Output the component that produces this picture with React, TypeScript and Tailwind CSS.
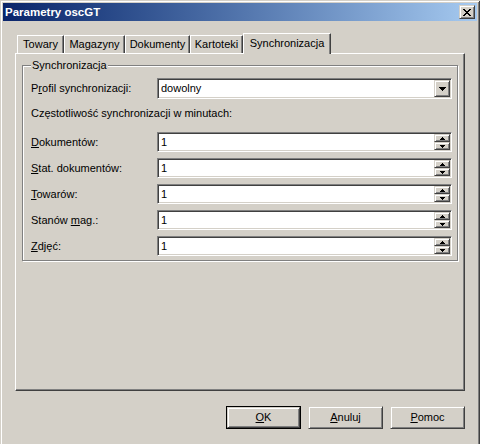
import type { ReactNode } from "react";

const font = { fontFamily: '"Liberation Sans", Arial, sans-serif' };

const tabs = [
  { title: "Towary", w: "w-[47px]" },
  { title: "Magazyny", w: "w-[61px]" },
  { title: "Dokumenty", w: "w-[65px]" },
  { title: "Kartoteki", w: "w-[53px]" },
];

const spinRows: { label: ReactNode }[] = [
  { label: <><u>D</u>okumentów:</> },
  { label: <><u>S</u>tat. dokumentów:</> },
  { label: <><u>T</u>owarów:</> },
  { label: <>Stanów <u>m</u>ag.:</> },
  { label: <><u>Z</u>djęć:</> },
];

// classic 3D edges
const raised =
  "border border-t-[#d4d0c8] border-l-[#d4d0c8] border-b-[#404040] border-r-[#404040] shadow-[inset_1px_1px_#ffffff,inset_-1px_-1px_#808080] bg-[#d4d0c8]";
const sunken =
  "border border-t-[#808080] border-l-[#808080] border-b-white border-r-white shadow-[inset_1px_1px_#404040,inset_-1px_-1px_#d4d0c8] bg-white";

function SpinBox() {
  return (
    <div className={`flex h-[20px] w-[295px] p-[1px] ${sunken}`}>
      <span className="flex-1 pl-[2px] text-[11px] leading-[16px] text-black">1</span>
      <div className="flex w-[16px] flex-col">
        <div className={`flex h-[8px] items-center justify-center ${raised}`}>
          <svg width="5" height="3" viewBox="0 0 5 3">
            <path d="M2 0h1v1h1v1h1v1H0V2h1V1h1z" fill="#000" />
          </svg>
        </div>
        <div className={`flex h-[8px] items-center justify-center ${raised}`}>
          <svg width="5" height="3" viewBox="0 0 5 3">
            <path d="M0 0h5v1H4v1H3v1H2V2H1V1H0z" fill="#000" />
          </svg>
        </div>
      </div>
    </div>
  );
}

function Button({ children, primary }: { children: ReactNode; primary?: boolean }) {
  return (
    <div className={`h-[23px] w-[75px] ${primary ? "border border-black" : ""}`}>
      <div
        className={`flex h-full w-full items-center justify-center ${raised} text-[11px] text-black`}
      >
        {children}
      </div>
    </div>
  );
}

export default function App() {
  return (
    <div className="h-[444px] w-[480px] overflow-hidden bg-[#d4d0c8]" style={font}>
      <div className="flex h-[446px] w-[480px] flex-col p-[3px] shadow-[inset_1px_1px_#d4d0c8,inset_-1px_-1px_#404040,inset_2px_2px_#ffffff,inset_-2px_-2px_#808080]">
        {/* title bar */}
        <div className="flex h-[18px] items-center justify-between bg-linear-to-r from-[#0a246a] to-[#a6caf0] pl-[2px] pr-[2px]">
          <span className="text-[11.5px] font-bold leading-[14px] text-white">Parametry oscGT</span>
          <div className={`flex h-[14px] w-[16px] items-center justify-center ${raised}`}>
            <svg width="8" height="7" viewBox="0 0 8 7">
              <path
                d="M0 0h2v1h1v1h2V1h1V0h2v1H7v1H6v1H5v1h1v1h1v1h1v1H6V6H5V5H3v1H2v1H0V6h1V5h1V4h1V3H2V2H1V1H0z"
                fill="#000"
              />
            </svg>
          </div>
        </div>

        <div className="flex flex-1 flex-col px-[12px] pt-[12px]">
          {/* tabs */}
          <div className="relative z-10 flex h-[20px] items-end pl-[2px]">
            {tabs.map((t) => (
              <div
                key={t.title}
                className={`flex h-[18px] ${t.w} items-center justify-center border-l border-t border-white border-r border-r-[#404040] shadow-[inset_-1px_0_#808080] text-[11px] text-black`}
              >
                {t.title}
              </div>
            ))}
            <div className="-mb-px flex h-[21px] w-[88px] items-center justify-center border-l border-t border-white border-r border-r-[#404040] bg-[#d4d0c8] pb-[2px] shadow-[inset_-1px_0_#808080] text-[11px] text-black">
              Synchronizacja
            </div>
          </div>

          {/* panel */}
          <div className="h-[338px] border-l border-t border-white border-r border-b border-r-[#404040] border-b-[#404040] px-[6px] pt-[11px] shadow-[inset_-1px_-1px_#808080]">
            <div className="relative border border-[#808080] pb-[4px] pl-[8px] pr-[4px] pt-[12px] shadow-[1px_1px_#ffffff,inset_1px_1px_#ffffff]">
              <span className="absolute left-[8px] top-[-7px] bg-[#d4d0c8] px-[1px] text-[11px] leading-[13px] text-black">
                Synchronizacja
              </span>

              <div className="flex items-center">
                <span className="w-[126px] text-[11px] text-black">
                  P<u>r</u>ofil synchronizacji:
                </span>
                <div className={`flex h-[21px] w-[295px] p-[1px] ${sunken}`}>
                  <span className="flex-1 pl-[2px] text-[11px] leading-[17px] text-black">dowolny</span>
                  <div className={`flex w-[16px] items-center justify-center ${raised}`}>
                    <svg width="7" height="4" viewBox="0 0 7 4">
                      <path d="M0 0h7v1H6v1H5v1H4v1H3V3H2V2H1V1H0z" fill="#000" />
                    </svg>
                  </div>
                </div>
              </div>

              <div className="mt-[8px] text-[11px] leading-[13px] text-black">
                Częstotliwość synchronizacji w minutach:
              </div>

              <div className="mt-[12px] flex flex-col gap-[6px]">
                {spinRows.map((r, i) => (
                  <div key={i} className="flex items-center">
                    <span className="w-[126px] text-[11px] text-black">{r.label}</span>
                    <SpinBox />
                  </div>
                ))}
              </div>
            </div>
          </div>

          {/* buttons */}
          <div className="mt-[15px] flex justify-end gap-[7px]">
            <Button primary>
              <u>O</u>K
            </Button>
            <Button>
              <u>A</u>nuluj
            </Button>
            <Button>
              <u>P</u>omoc
            </Button>
          </div>
        </div>
      </div>
    </div>
  );
}
